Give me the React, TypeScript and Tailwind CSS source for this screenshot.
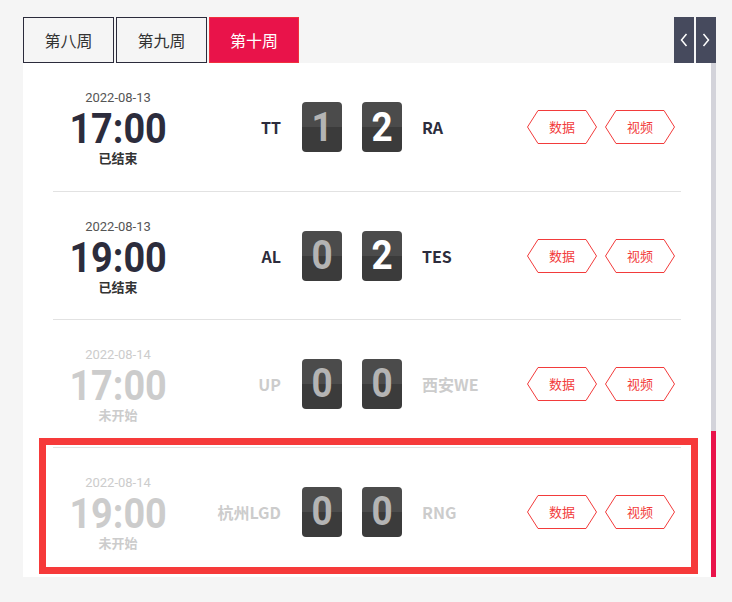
import React from "react";

type Match = {
  date: string;
  time: string;
  status: string;
  home: string;
  away: string;
  homeScore: number;
  awayScore: number;
  done: boolean;
};

const matches: Match[] = [
  { date: "2022-08-13", time: "17:00", status: "已结束", home: "TT", away: "RA", homeScore: 1, awayScore: 2, done: true },
  { date: "2022-08-13", time: "19:00", status: "已结束", home: "AL", away: "TES", homeScore: 0, awayScore: 2, done: true },
  { date: "2022-08-14", time: "17:00", status: "未开始", home: "UP", away: "西安WE", homeScore: 0, awayScore: 0, done: false },
  { date: "2022-08-14", time: "19:00", status: "未开始", home: "杭州LGD", away: "RNG", homeScore: 0, awayScore: 0, done: false },
];

const cjk = "font-['Microsoft_YaHei','Noto_Sans_CJK_SC',sans-serif]";
const din = "font-['Roboto','Noto_Sans',sans-serif]";

function ScoreBox({ value, win }: { value: number; win: boolean }) {
  return (
    <div className="relative w-[40px] h-[50px] rounded-[4px] overflow-hidden flex flex-col">
      <div className="h-1/2 bg-[#4b4b4b]" />
      <div className="h-1/2 bg-[#3b3b3b]" />
      <span
        className={`absolute inset-0 flex items-center justify-center text-[41px] font-bold leading-none scale-x-[0.9] ${din} ${
          win ? "text-white" : "text-[#b4b4b4]"
        }`}
      >
        {value}
      </span>
    </div>
  );
}

function HexButton({ label }: { label: string }) {
  return (
    <div className="relative w-[70px] h-[34px] flex items-center justify-center">
      <svg className="absolute inset-0" width="70" height="34" viewBox="0 0 70 34">
        <polygon points="0.5,17 11,0.5 59,0.5 69.5,17 59,33.5 11,33.5" fill="none" stroke="#f23b3b" strokeWidth="1" />
      </svg>
      <span className={`relative text-[13px] text-[#f23b3b] ${cjk}`}>{label}</span>
    </div>
  );
}

function MatchRow({ m, first }: { m: Match; first: boolean }) {
  const muted = !m.done;
  const nameColor = muted ? "text-[#cccccc]" : "text-[#2c2c3c]";
  const homeWin = m.done && m.homeScore > m.awayScore;
  const awayWin = m.done && m.awayScore > m.homeScore;
  return (
    <div className={`h-[128px] flex items-center ${first ? "" : "border-t border-[#e2e2e2]"}`}>
      <div className="w-[130px] flex flex-col items-center">
        <span className={`text-[13px] leading-[16px] ${din} ${muted ? "text-[#cccccc]" : "text-[#555555]"}`}>{m.date}</span>
        <span
          className={`h-[46px] text-[42px] font-bold leading-[46px] scale-x-[0.9] ${din} ${
            muted ? "text-[#cccccc]" : "text-[#2c2c3c]"
          }`}
        >
          {m.time}
        </span>
        <span className={`text-[13px] leading-[12px] font-bold ${cjk} ${muted ? "text-[#cccccc]" : "text-[#333333]"}`}>
          {m.status}
        </span>
      </div>
      <div className={`w-[98px] text-right text-[16px] font-bold ${cjk} ${nameColor}`}>{m.home}</div>
      <div className="ml-[21px]">
        <ScoreBox value={m.homeScore} win={homeWin} />
      </div>
      <div className="ml-[20px]">
        <ScoreBox value={m.awayScore} win={awayWin} />
      </div>
      <div className={`ml-[20px] w-[100px] text-[16px] font-bold ${cjk} ${nameColor}`}>{m.away}</div>
      <div className="ml-auto mr-[6px] flex gap-[8px]">
        <HexButton label="数据" />
        <HexButton label="视频" />
      </div>
    </div>
  );
}

export default function App() {
  const weeks = ["第八周", "第九周", "第十周"];
  const active = 2;

  return (
    <div className={`w-[732px] h-[602px] bg-[#f5f5f5] pt-[17px] pl-[23px] ${cjk}`}>
      <div className="w-[693px] relative">
        <div className="flex h-[46px]">
          <div className="flex gap-[2px]">
            {weeks.map((w, i) => (
              <div
                key={w}
                className={`h-[46px] flex items-center justify-center text-[16px] ${
                  i === active
                    ? "w-[90px] bg-[#e9134a] border border-[#f0303d] text-white"
                    : "w-[91px] border border-[#2b2b3b] text-[#333333]"
                }`}
              >
                {w}
              </div>
            ))}
          </div>
          <div className="ml-auto flex gap-[2px]">
            <div className="w-[20px] h-[46px] bg-[#464a5d] flex items-center justify-center">
              <svg width="8" height="14" viewBox="0 0 8 14">
                <path d="M6.5 1 L1.5 7 L6.5 13" fill="none" stroke="white" strokeWidth="1.5" />
              </svg>
            </div>
            <div className="w-[20px] h-[46px] bg-[#464a5d] flex items-center justify-center">
              <svg width="8" height="14" viewBox="0 0 8 14">
                <path d="M1.5 1 L6.5 7 L1.5 13" fill="none" stroke="white" strokeWidth="1.5" />
              </svg>
            </div>
          </div>
        </div>
        <div className="flex h-[514px]">
          <div className="w-[688px] bg-white px-[30px]">
            {matches.map((m, i) => (
              <MatchRow key={i} m={m} first={i === 0} />
            ))}
          </div>
          <div className="w-[5px] flex flex-col">
            <div className="h-[368px] bg-[#d3d3da]" />
            <div className="flex-1 bg-[#e9134a]" />
          </div>
        </div>
        {/* highlight on the last match */}
        <div className="absolute left-[16px] top-[421px] w-[659px] h-[136px] border-[7px] border-[#f63a3a] pointer-events-none" />
      </div>
    </div>
  );
}
